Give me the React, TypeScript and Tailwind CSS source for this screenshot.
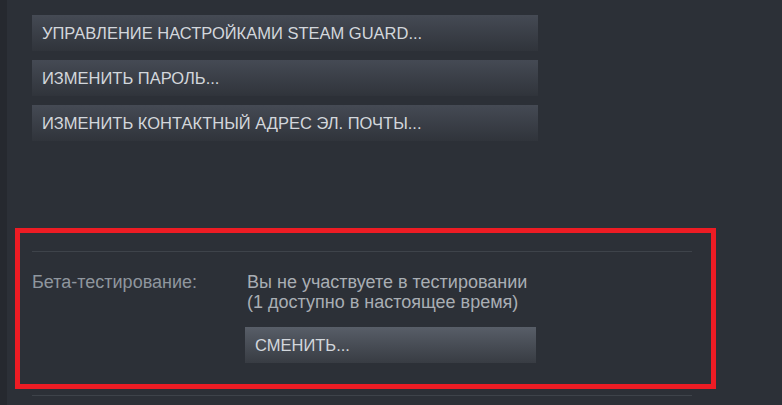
const actions = [
  "УПРАВЛЕНИЕ НАСТРОЙКАМИ STEAM GUARD...",
  "ИЗМЕНИТЬ ПАРОЛЬ...",
  "ИЗМЕНИТЬ КОНТАКТНЫЙ АДРЕС ЭЛ. ПОЧТЫ...",
];

export default function App() {
  return (
    <div className="flex w-[782px] h-[405px] overflow-hidden bg-[#2c3037] font-['Liberation_Sans',Arial,sans-serif]">
      {/* left rail */}
      <div className="w-[7px] shrink-0 bg-[#26292f]" />

      <div className="flex flex-col pl-[8px] pt-[15px]">
        {/* account buttons */}
        <div className="flex flex-col gap-[9px] ml-[17px]">
          {actions.map((a) => (
            <button
              key={a}
              className="w-[506px] h-[36px] px-[10px] text-left text-[16.5px] text-[#d3d7dc] bg-gradient-to-b from-[#454a54] to-[#30343b]"
            >
              {a}
            </button>
          ))}
        </div>

        {/* beta section, highlighted */}
        <div className="mt-[87px] w-[701px] border-[5px] border-[#ed1c24] pl-[12px] pr-[19px] pt-[18px] pb-[21px]">
          <div className="h-px bg-[#3e434a]" />
          <div className="flex mt-[20px]">
            <div className="w-[213px] shrink-0 text-[18px] leading-[20px] text-[#8f969e]">
              Бета-тестирование:
            </div>
            <div className="flex flex-col">
              <p className="text-[18px] leading-[20px] text-[#a9aeb4] pl-[2px]">
                Вы не участвуете в тестировании
                <br />
                (1 доступно в настоящее время)
              </p>
              <button className="mt-[15px] w-[291px] h-[36px] px-[10px] text-left text-[16.5px] text-[#d3d7dc] bg-gradient-to-b from-[#585e68] to-[#383c43]">
                СМЕНИТЬ...
              </button>
            </div>
          </div>
        </div>

        <div className="mt-[6px] ml-[17px] w-[660px] h-px bg-[#3e434a]" />
      </div>
    </div>
  );
}
